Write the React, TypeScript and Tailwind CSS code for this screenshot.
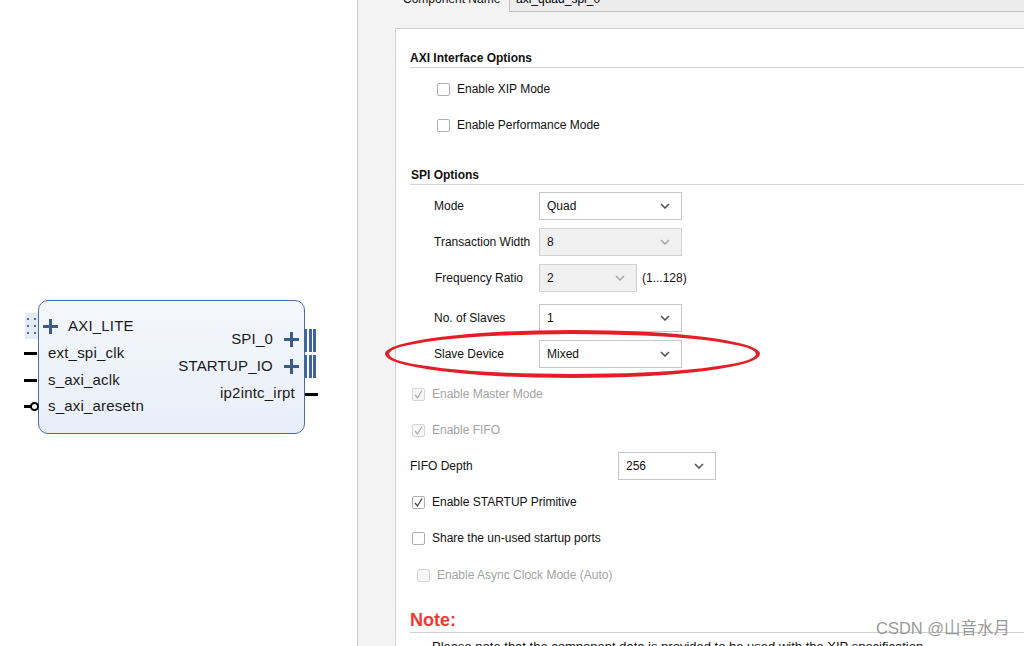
import React from 'react';

const Chevron = ({ disabled }: { disabled?: boolean }) => (
  <svg width="10" height="6" viewBox="0 0 10 6" className="shrink-0">
    <path d="M1 1l4 4 4-4" fill="none" stroke={disabled ? '#a8a8a8' : '#555'} strokeWidth="1.6" />
  </svg>
);

const Select = ({ value, width, disabled }: { value: string; width: string; disabled?: boolean }) => (
  <div
    className={`${width} h-[28px] flex items-center justify-between pl-[7px] pr-[11px] border ${
      disabled ? 'bg-[#f0f0f0] border-[#d2d2d2]' : 'bg-white border-[#c6c6c6]'
    }`}
  >
    <span className="text-[#111]">{value}</span>
    <Chevron disabled={disabled} />
  </div>
);

const Check = ({ checked, disabled }: { checked?: boolean; disabled?: boolean }) => (
  <div
    className={`w-[13px] h-[13px] rounded-[2px] border flex items-center justify-center shrink-0 ${
      disabled ? 'border-[#d6d6d6] bg-[#f6f6f6]' : 'border-[#aeaeae] bg-white'
    }`}
  >
    {checked && (
      <svg width="11" height="11" viewBox="0 0 11 11">
        <path d="M2 6l2.5 3L9 1.5" fill="none" stroke={disabled ? '#b0b0b0' : '#444'} strokeWidth="1.3" />
      </svg>
    )}
  </div>
);

const Plus = () => (
  <svg width="15" height="15" viewBox="0 0 15 15" className="shrink-0">
    <path d="M7.5 0v15M0 7.5h15" stroke="#3b5b8c" strokeWidth="3" />
  </svg>
);

const Bars = () => (
  <div className="flex gap-[1.5px] h-[23px]">
    <div className="w-[3px] bg-[#3d64a0]" />
    <div className="w-[3px] bg-[#3d64a0]" />
    <div className="w-[3px] bg-[#3d64a0]" />
  </div>
);

const CheckRow = ({
  label,
  checked,
  disabled,
  indent,
  mt,
}: {
  label: string;
  checked?: boolean;
  disabled?: boolean;
  indent: string;
  mt?: string;
}) => (
  <div className={`h-[36px] flex items-center gap-[7px] ${indent} ${mt ?? ''}`}>
    <Check checked={checked} disabled={disabled} />
    <span className={disabled ? 'text-[#a3a3a3]' : 'text-[#111]'}>{label}</span>
  </div>
);

const BlockDiagram = () => (
  <div className="absolute left-[38px] top-[300px] w-[267px] h-[134px] rounded-[10px] border border-[#4a6ca8] bg-gradient-to-b from-[#f4f7fc] to-[#e8eef8] text-[15px] tracking-[0.2px] text-[#1a1a1a]">
    <div className="flex justify-between h-full">
      <div className="flex flex-col pt-[12px] pl-[9px]">
        <div className="h-[27px] flex items-center gap-[10px] -ml-[5px]">
          <Plus />
          <span>AXI_LITE</span>
        </div>
        <div className="h-[27px] flex items-center">ext_spi_clk</div>
        <div className="h-[26px] flex items-center">s_axi_aclk</div>
        <div className="h-[27px] flex items-center">s_axi_aresetn</div>
      </div>
      <div className="flex flex-col items-end pt-[25px] pr-[9px]">
        <div className="h-[27px] flex items-center gap-[11px] -mr-[4px]">
          <span>SPI_0</span>
          <Plus />
        </div>
        <div className="h-[27px] flex items-center gap-[11px] -mr-[4px]">
          <span>STARTUP_IO</span>
          <Plus />
        </div>
        <div className="h-[27px] flex items-center">ip2intc_irpt</div>
      </div>
    </div>

    {/* pins */}
    <div className="absolute -left-[14px] top-[12px] w-[13px] h-[26px] bg-[#e2ebf7] grid grid-cols-2 place-items-center py-[2px]">
      {[0, 1, 2, 3, 4, 5].map((i) => (
        <div key={i} className="w-[2px] h-[2px] bg-[#4a6ca8]" />
      ))}
    </div>
    <div className="absolute -left-[15px] top-[51px] w-[13px] h-[3px] bg-black" />
    <div className="absolute -left-[15px] top-[78px] w-[13px] h-[3px] bg-black" />
    <div className="absolute -left-[15px] top-[104px] w-[8px] h-[3px] bg-black" />
    <div className="absolute -left-[9px] top-[101px] w-[9px] h-[9px] rounded-full border-2 border-black bg-white" />
    <div className="absolute left-[265px] top-[28px]">
      <Bars />
    </div>
    <div className="absolute left-[265px] top-[54px]">
      <Bars />
    </div>
    <div className="absolute left-[266px] top-[92px] w-[13px] h-[3px] bg-black" />
  </div>
);

export default function App() {
  return (
    <div className="relative flex w-[1024px] h-[646px] overflow-hidden bg-white text-[12px] font-['Liberation_Sans',Arial,sans-serif]">
      <div className="relative w-[357px] h-full bg-white">
        <BlockDiagram />
      </div>

      <div className="flex-1 flex flex-col border-l border-[#c9c9c9] bg-[#f3f3f3]">
        <div className="h-[28px] shrink-0 flex flex-col justify-end overflow-hidden">
          <div className="flex h-[27px] shrink-0 mb-[16px]">
            <div className="w-[151px] pl-[45px] flex items-center text-[#111]">Component Name</div>
            <div className="flex-1 flex items-center pl-[6px] bg-[#ececec] border border-[#c0c0c0] border-r-0">
              axi_quad_spi_0
            </div>
          </div>
        </div>

        <div className="flex-1 ml-[37px] border-l border-t border-[#cfcfcf] bg-white pl-[14px] pt-[21px] flex flex-col">
          <div className="leading-[16px] pb-[1px] border-b border-[#d2d2d2] font-bold text-[#111]">
            AXI Interface Options
          </div>
          <CheckRow label="Enable XIP Mode" indent="pl-[27px]" mt="mt-[3px]" />
          <CheckRow label="Enable Performance Mode" indent="pl-[27px]" />

          <div className="mt-[24px] leading-[16px] pb-[1px] border-b border-[#d2d2d2] font-bold text-[#111] pl-[1px]">
            SPI Options
          </div>

          <div className="mt-[3px] h-[36px] flex items-center pl-[24px]">
            <span className="w-[105px] text-[#111]">Mode</span>
            <Select value="Quad" width="w-[143px]" />
          </div>
          <div className="h-[36px] flex items-center pl-[24px]">
            <span className="w-[105px] text-[#111]">Transaction Width</span>
            <Select value="8" width="w-[143px]" disabled />
          </div>
          <div className="h-[36px] flex items-center pl-[24px]">
            <span className="w-[105px] pl-[1px] text-[#111]">Frequency Ratio</span>
            <Select value="2" width="w-[98px]" disabled />
            <span className="ml-[5px] text-[#111]">(1...128)</span>
          </div>
          <div className="mt-[4px] h-[36px] flex items-center pl-[24px]">
            <span className="w-[105px] text-[#111]">No. of Slaves</span>
            <Select value="1" width="w-[143px]" />
          </div>
          <div className="h-[36px] flex items-center pl-[24px]">
            <span className="w-[105px] text-[#111]">Slave Device</span>
            <Select value="Mixed" width="w-[143px]" />
          </div>

          <CheckRow label="Enable Master Mode" checked disabled indent="pl-[2px]" mt="mt-[4px]" />
          <CheckRow label="Enable FIFO" checked disabled indent="pl-[2px]" />
          <div className="h-[36px] flex items-center">
            <span className="w-[208px] text-[#111]">FIFO Depth</span>
            <Select value="256" width="w-[98px]" />
          </div>
          <CheckRow label="Enable STARTUP Primitive" checked indent="pl-[2px]" />
          <CheckRow label="Share the un-used startup ports" indent="pl-[2px]" />
          <CheckRow label="Enable Async Clock Mode (Auto)" disabled indent="pl-[7px]" mt="mt-[1px]" />

          <div className="mt-[16px] leading-[22px] pb-[1px] border-b border-[#cfcfcf] text-[18px] font-bold text-[#ef3a33]">
            Note:
          </div>
          <div className="mt-[6px] pl-[22px] text-[13px] leading-[15px] text-[#111] whitespace-nowrap">
            Please note that the component data is provided to be used with the XIP specification
          </div>
        </div>
      </div>

      <div className="absolute left-[385px] top-[330px] w-[375px] h-[48px] rounded-[50%] border-4 border-[#e41e26]" />

      <div className="absolute left-[876px] top-[616px] text-[16.5px] text-[#9a9a9a] font-['Liberation_Sans','Noto_Sans_CJK_SC',sans-serif]">
        CSDN @山音水月
      </div>
    </div>
  );
}
